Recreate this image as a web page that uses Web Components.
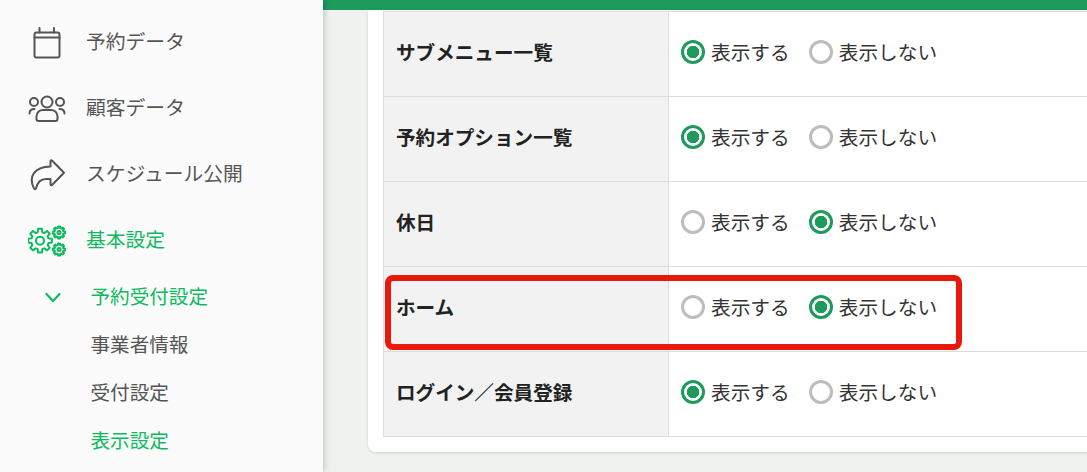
<!DOCTYPE html>
<html lang="ja">
<head>
<meta charset="utf-8">
<title>表示設定</title>
<style>
  html, body { margin: 0; height: 100%; }
  body {
    overflow: hidden;
    background: #f0f2f0;
    font-family: "Noto Sans CJK JP", "Noto Sans", sans-serif;
  }
</style>
</head>
<body>
<admin-layout>
  <side-menu slot="side">
    <nav-item><menu-icon name="calendar"></menu-icon>予約データ</nav-item>
    <nav-item><menu-icon name="people"></menu-icon>顧客データ</nav-item>
    <nav-item><menu-icon name="share"></menu-icon>スケジュール公開</nav-item>
    <nav-item active><menu-icon name="gears"></menu-icon>基本設定</nav-item>
    <sub-item active open>予約受付設定</sub-item>
    <sub-item>事業者情報</sub-item>
    <sub-item>受付設定</sub-item>
    <sub-item active>表示設定</sub-item>
  </side-menu>
  <settings-card>
    <setting-row label="サブメニュー一覧" value="show"></setting-row>
    <setting-row label="予約オプション一覧" value="show"></setting-row>
    <setting-row label="休日" value="hide"></setting-row>
    <setting-row label="ホーム" value="hide" highlight></setting-row>
    <setting-row label="ログイン／会員登録" value="show"></setting-row>
  </settings-card>
</admin-layout>

<script>
class AdminLayout extends HTMLElement {
  constructor() {
    super();
    this.attachShadow({ mode: 'open' });
    this.shadowRoot.innerHTML = `
    <style>
      :host { display: flex; height: 472px; overflow: hidden; }
      .side { flex: 0 0 323px; position: relative; z-index: 1; background: #fbfbfb; box-shadow: 1px 0 6px rgba(0, 0, 0, 0.22); }
      main { flex: 1; min-width: 0; display: flex; flex-direction: column; }
      .bar { flex: 0 0 10px; background: #1f9a5d; }
    </style>
    <div class="side"><slot name="side"></slot></div>
    <main>
      <div class="bar"></div>
      <slot></slot>
    </main>
    `;
  }
}

class SideMenu extends HTMLElement {
  constructor() {
    super();
    this.attachShadow({ mode: 'open' });
    this.shadowRoot.innerHTML = `
    <style>
      :host { display: block; padding-top: 8px; }
    </style>
    <slot></slot>
    `;
  }
}

class NavItem extends HTMLElement {
  constructor() {
    super();
    this.attachShadow({ mode: 'open' });
    this.shadowRoot.innerHTML = `
    <style>
      :host {
        display: flex;
        align-items: center;
        gap: 20px;
        height: 66px;
        box-sizing: border-box;
        padding: 0 0 2px 28px;
        font-size: 19.8px;
        color: #555;
      }
      :host([active]) { color: #0dba60; }
      ::slotted(menu-icon) { margin-top: 2px; }
    </style>
    <slot></slot>
    `;
  }
}

class SubItem extends HTMLElement {
  constructor() {
    super();
    this.attachShadow({ mode: 'open' });
    this.shadowRoot.innerHTML = `
    <style>
      :host {
        display: flex;
        align-items: center;
        height: 48px;
        box-sizing: border-box;
        padding: 0 0 2px 45px;
        font-size: 19.6px;
        color: #555;
      }
      :host([active]) { color: #0dba60; }
      .arrow { flex: 0 0 45.5px; height: 12px; margin-top: 5px; }
      svg { display: block; }
      :host(:not([open])) svg { visibility: hidden; }
    </style>
    <div class="arrow">
      <svg width="16" height="12" viewBox="0 0 16 12" fill="none" stroke="currentColor" stroke-width="2.2" stroke-linecap="round" stroke-linejoin="round">
        <path d="M1.5 2l6.5 7 6.5-7"/>
      </svg>
    </div>
    <slot></slot>
    `;
  }
}

// builds a cog outline with n teeth
function gearPath(cx, cy, outer, root, n) {
  const step = (Math.PI * 2) / n;
  const pts = [];
  for (let i = 0; i < n; i++) {
    const a = i * step;
    const at = (r, o) => [cx + r * Math.cos(a + o * step), cy + r * Math.sin(a + o * step)];
    pts.push(at(root, -0.34), at(outer, -0.2), at(outer, 0.2), at(root, 0.34));
  }
  return 'M' + pts.map((p) => p[0].toFixed(2) + ' ' + p[1].toFixed(2)).join('L') + 'Z';
}

const ICONS = {
  calendar: `<rect x="6.5" y="10.5" width="25" height="25" rx="2"/><path d="M6.5 15.5h25M11.5 6v4.5M26 6v4.5"/>`,
  people: `<circle cx="19" cy="14" r="5.5"/><circle cx="6" cy="14" r="4"/><circle cx="32" cy="14" r="4"/>
    <path d="M8.5 30.5v-2c0-4 3-6.5 6.5-6.5h8c3.5 0 6.5 2.5 6.5 6.5v2.500a2 2 0 0 1-2 2h-17a2 2 0 0 1-2-2z"/>
    <path d="M1.500 25.500c0-3 2-4.500 5-4.500M36.500 25.500c0-3-2-4.500-5-4.500"/>`,
  share: `<path d="M24 6.500L36 18.700 24 31Q22.500 31.800 22.500 30V25H18C12.500 25 9.500 28 8 34.500Q7 36 6 34.500C0 23 6 13 22.500 12.500V7.500Q22.500 5.500 24 6.500Z"/>`,
  gears: `<path d="${gearPath(12, 20.7, 12, 8.8, 8)}"/><circle cx="12" cy="20.700" r="4"/>
    <path d="${gearPath(31, 12.500, 6.200, 4.600, 8)}"/><circle cx="31" cy="12.500" r="1.500"/>
    <path d="${gearPath(31, 29.500, 6.200, 4.600, 8)}"/><circle cx="31" cy="29.500" r="1.500"/>`,
};

class MenuIcon extends HTMLElement {
  constructor() {
    super();
    this.attachShadow({ mode: 'open' });
    this.shadowRoot.innerHTML = `
    <style>
      :host { display: block; flex: 0 0 38px; height: 38px; }
      svg { display: block; }
    </style>
    <svg width="38" height="38" viewBox="0 0 38 38" fill="none" stroke="currentColor" stroke-width="2" stroke-linejoin="round" stroke-linecap="round">
      ${ICONS[this.getAttribute('name')] || ''}
    </svg>
    `;
  }
}

class SettingsCard extends HTMLElement {
  constructor() {
    super();
    this.attachShadow({ mode: 'open' });
    this.shadowRoot.innerHTML = `
    <style>
      :host {
        display: block;
        margin: 0 -60px 0 45px;
        padding: 1px 15px 15px;
        background: #fff;
        border-radius: 0 0 8px 8px;
        box-shadow: 0 1px 3px rgba(0, 0, 0, 0.14);
      }
      .table { border-top: 1px solid #ddd; border-left: 1px solid #ddd; }
    </style>
    <div class="table"><slot></slot></div>
    `;
  }
}

class SettingRow extends HTMLElement {
  constructor() {
    super();
    this.attachShadow({ mode: 'open' });
    const value = this.getAttribute('value');
    this.shadowRoot.innerHTML = `
    <style>
      :host {
        display: grid;
        grid-template-columns: 285px 1fr;
        position: relative;
        height: 85px;
        box-sizing: border-box;
        border-bottom: 1px solid #ddd;
      }
      .head {
        display: flex;
        align-items: center;
        padding: 0 0 6px 12px;
        background: #f2f2f2;
        border-right: 1px solid #ddd;
        font-size: 19.6px;
        font-weight: 700;
        color: #222;
      }
      .body {
        display: flex;
        align-items: center;
        gap: 19px;
        padding: 0 0 6px 12px;
      }
      .mark {
        position: absolute;
        left: 1px;
        top: 8px;
        width: 577px;
        height: 75px;
        box-sizing: border-box;
        border: 6px solid #e8190c;
        border-radius: 8px;
      }
    </style>
    <div class="head">${this.getAttribute('label')}</div>
    <div class="body">
      <radio-option ${value === 'show' ? 'checked' : ''}>表示する</radio-option>
      <radio-option ${value === 'hide' ? 'checked' : ''}>表示しない</radio-option>
    </div>
    ${this.hasAttribute('highlight') ? '<div class="mark"></div>' : ''}
    `;
  }
}

class RadioOption extends HTMLElement {
  constructor() {
    super();
    this.attachShadow({ mode: 'open' });
    this.shadowRoot.innerHTML = `
    <style>
      :host {
        display: inline-flex;
        align-items: center;
        gap: 6px;
        font-size: 19.7px;
        color: #333;
      }
      .dot {
        width: 24px;
        height: 24px;
        margin-top: 2px;
        box-sizing: border-box;
        border: 3px solid #bdbdbd;
        border-radius: 50%;
        background: #fff;
      }
      :host([checked]) .dot {
        border-color: #1f9a5d;
        background: radial-gradient(circle, #1f9a5d 0 6px, #fff 6.5px);
      }
    </style>
    <span class="dot"></span>
    <slot></slot>
    `;
  }
}

window.customElements.define('admin-layout', AdminLayout);
window.customElements.define('side-menu', SideMenu);
window.customElements.define('nav-item', NavItem);
window.customElements.define('sub-item', SubItem);
window.customElements.define('menu-icon', MenuIcon);
window.customElements.define('settings-card', SettingsCard);
window.customElements.define('setting-row', SettingRow);
window.customElements.define('radio-option', RadioOption);
</script>
</body>
</html>
